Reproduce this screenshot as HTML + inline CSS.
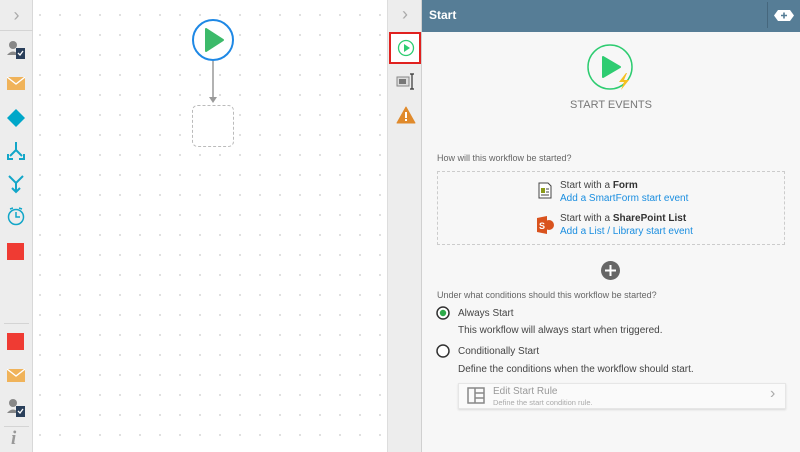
<!DOCTYPE html>
<html><head><style>
*{margin:0;padding:0;box-sizing:border-box}
body{width:800px;height:452px;overflow:hidden;font-family:"Liberation Sans",sans-serif;background:#fff;position:relative}
.abs{position:absolute}
#left{left:0;top:0;width:33px;height:452px;background:#ededed;border-right:1px solid #d8d8d8}
#canvas{left:33px;top:0;width:354px;height:452px;background-color:#fff;background-image:radial-gradient(circle,#d0d0d0 0.7px,transparent 1.1px);background-size:20px 20px;background-position:-3px 5px}
#strip{left:387px;top:0;width:35px;height:452px;background:#ededed;border-left:1px solid #ddd;border-right:1px solid #d0d0d0}
#panel{left:422px;top:0;width:378px;height:452px;background:#f7f7f7}
#hdr{left:0;top:0;width:378px;height:32px;background:#567d96;color:#fff;font-size:12px;font-weight:bold;padding:8px 0 0 7px}
.t{font-size:9px;color:#666}
.n{font-size:10px;color:#444}
.l{font-size:10px;color:#1a8ee0}
.chev{color:#aaa;font-size:18px;text-align:center}
</style></head><body>
<div id="left" class="abs">
 <div class="abs chev" style="left:0;top:0;width:33px;height:31px;border-bottom:1px solid #d4d4d4;line-height:30px">&#x203A;</div>
 <svg class="abs" style="left:6px;top:40px" width="22" height="20"><circle cx="7" cy="5" r="4" fill="#888"/><path d="M1 15 Q7 8 13 15Z" fill="#888"/><rect x="10" y="8" width="9" height="11" fill="#2a3f5a"/><path d="M12 13l2 2 3-4" stroke="#fff" fill="none" stroke-width="1.3"/></svg>
 <svg class="abs" style="left:7px;top:77px" width="18" height="13"><rect width="18" height="13" fill="#f0b35a"/><path d="M0 0l9 7 9-7" stroke="#fff" fill="none" stroke-width="1.3"/></svg>
 <svg class="abs" style="left:6px;top:108px" width="20" height="20"><path d="M10 1l9 9-9 9-9-9z" fill="#00a7c9"/></svg>
 <svg class="abs" style="left:7px;top:141px" width="18" height="20" fill="none" stroke="#12a6c8" stroke-width="2"><path d="M9 1v8M9 9l-6 6M9 9l6 6"/><path d="M1 13v5h5M17 13v5h-5" /></svg>
 <svg class="abs" style="left:7px;top:174px" width="18" height="20" fill="none" stroke="#12a6c8" stroke-width="2"><path d="M2 2l7 7 7-7M9 9v8"/><path d="M5 14l4 4 4-4"/></svg>
 <svg class="abs" style="left:6px;top:206px" width="20" height="20" fill="none" stroke="#12a6c8" stroke-width="1.5"><circle cx="10" cy="11" r="7.5"/><path d="M10 6v5h4M4 3l3-1M16 3l-3-1"/></svg>
 <div class="abs" style="left:7px;top:243px;width:17px;height:17px;background:#ef3b33"></div>
 <div class="abs" style="left:4px;top:323px;width:25px;height:1px;background:#d4d4d4"></div>
 <div class="abs" style="left:7px;top:333px;width:17px;height:17px;background:#ef3b33"></div>
 <svg class="abs" style="left:7px;top:369px" width="18" height="13"><rect width="18" height="13" fill="#f0b35a"/><path d="M0 0l9 7 9-7" stroke="#fff" fill="none" stroke-width="1.3"/></svg>
 <svg class="abs" style="left:6px;top:398px" width="22" height="20"><circle cx="7" cy="5" r="4" fill="#888"/><path d="M1 15 Q7 8 13 15Z" fill="#888"/><rect x="10" y="8" width="9" height="11" fill="#2a3f5a"/><path d="M12 13l2 2 3-4" stroke="#fff" fill="none" stroke-width="1.3"/></svg>
 <div class="abs" style="left:4px;top:426px;width:25px;height:1px;background:#d4d4d4"></div>
 <div class="abs" style="left:11px;top:428px;font:italic bold 19px 'Liberation Serif',serif;color:#999">i</div>
</div>
<div id="canvas" class="abs">
 <svg class="abs" style="left:158px;top:18px" width="46" height="132">
  <circle cx="22" cy="22" r="20" fill="#fff" stroke="#1e88e5" stroke-width="2"/>
  <path d="M15 11 L32 22 L15 33Z" fill="#3dba6a" stroke="#3dba6a" stroke-width="2" stroke-linejoin="round"/>
  <line x1="22" y1="43" x2="22" y2="80" stroke="#999" stroke-width="1.5"/>
  <path d="M18 79l4 6 4-6z" fill="#999"/>
  <rect x="1.5" y="87.5" width="41" height="41" rx="5" fill="#fff" stroke="#bbb" stroke-dasharray="3 2"/>
 </svg>
</div>
<div id="strip" class="abs">
 <div class="abs chev" style="left:0;top:0;width:34px;height:31px;line-height:29px">&#x203A;</div>
 <div class="abs" style="left:1px;top:32px;width:32px;height:32px;border:2px solid #e0211f;background:#fff"></div>
 <svg class="abs" style="left:9px;top:39px" width="18" height="18"><circle cx="9" cy="9" r="7.5" fill="none" stroke="#2ecc71" stroke-width="1.3"/><path d="M7 5l6 4-6 4z" fill="#2ecc71"/></svg>
 <svg class="abs" style="left:8px;top:73px" width="20" height="18"><rect x="1" y="4" width="12" height="9" fill="#ddd" stroke="#888"/><rect x="3" y="6" width="7" height="5" fill="#777"/><path d="M14 1h4M16 1v15M14 16h4" stroke="#333" stroke-width="1.2" fill="none"/></svg>
 <svg class="abs" style="left:8px;top:106px" width="20" height="18"><path d="M10 1L19 17H1Z" fill="#e08a2c" stroke="#e08a2c" stroke-linejoin="round"/><rect x="9" y="6" width="2" height="6" fill="#fff"/><rect x="9" y="13" width="2" height="2" fill="#fff"/></svg>
</div>
<div id="panel" class="abs">
 <div id="hdr" class="abs">Start</div>
 <div class="abs" style="left:345px;top:2px;width:1px;height:26px;background:#46677d"></div>
 <svg class="abs" style="left:352px;top:10px" width="20" height="11"><path d="M4 0h12l4 5.5-4 5.5H4L0 5.5z" fill="#fff"/><path d="M10 2.5v6M7 5.5h6" stroke="#567d96" stroke-width="1.6"/></svg>
 <svg class="abs" style="left:164px;top:43px" width="52" height="50"><circle cx="24" cy="24" r="22" fill="none" stroke="#2ecc71" stroke-width="1.5"/><path d="M17 14 L34 24 L17 34Z" fill="#2ecc71" stroke="#2ecc71" stroke-width="2" stroke-linejoin="round"/><path d="M40 30l-7 9h5l-3 8 8-10h-5l3-7z" fill="#f5c022"/></svg>
 <div class="abs" style="left:0;top:99px;width:378px;text-align:center;font-size:11px;color:#777">START EVENTS</div>
 <div class="abs t" style="left:15px;top:153px">How will this workflow be started?</div>
 <div class="abs" style="left:15px;top:171px;width:348px;height:74px;border:1px dashed #ccc"></div>
 <svg class="abs" style="left:116px;top:182px" width="14" height="17"><path d="M1 1h9l3 3v12H1z" fill="#fff" stroke="#444"/><rect x="3" y="6" width="4" height="5" fill="#8a9a1a"/><path d="M8 7h3M8 10h3M3 13h8" stroke="#444"/></svg>
 <div class="abs n" style="left:138px;top:180px">Start with a <b style="color:#333">Form</b></div>
 <div class="abs l" style="left:138px;top:193px">Add a SmartForm start event</div>
 <svg class="abs" style="left:113px;top:215px" width="20" height="20"><path d="M2 3l10-2v18L2 17z" fill="#d9531e"/><circle cx="14" cy="10" r="5" fill="#d9531e"/><text x="4" y="14" font-size="9" fill="#fff" font-family="Liberation Sans" font-weight="bold">S</text></svg>
 <div class="abs n" style="left:138px;top:213px">Start with a <b style="color:#333">SharePoint List</b></div>
 <div class="abs l" style="left:138px;top:226px">Add a List / Library start event</div>
 <svg class="abs" style="left:179px;top:261px" width="19" height="19"><circle cx="9.5" cy="9.5" r="9.5" fill="#666"/><path d="M9.5 4v11M4 9.5h11" stroke="#fff" stroke-width="2"/></svg>
 <div class="abs t" style="left:15px;top:290px">Under what conditions should this workflow be started?</div>
 <svg class="abs" style="left:14px;top:306px" width="14" height="14"><circle cx="7" cy="7" r="6" fill="#fff" stroke="#333" stroke-width="1.5"/><circle cx="7" cy="7" r="3.2" fill="#2eaa4a"/></svg>
 <div class="abs n" style="left:36px;top:308px">Always Start</div>
 <div class="abs n" style="left:36px;top:325px">This workflow will always start when triggered.</div>
 <svg class="abs" style="left:14px;top:344px" width="14" height="14"><circle cx="7" cy="7" r="6" fill="#fff" stroke="#333" stroke-width="1.5"/></svg>
 <div class="abs n" style="left:36px;top:346px">Conditionally Start</div>
 <div class="abs n" style="left:36px;top:364px">Define the conditions when the workflow should start.</div>
 <div class="abs" style="left:36px;top:383px;width:328px;height:26px;background:#fafafa;border:1px solid #e6e6e6;box-shadow:0 1px 2px rgba(0,0,0,.12)"></div>
 <svg class="abs" style="left:45px;top:387px" width="18" height="17" fill="none" stroke="#888" stroke-width="1.5"><rect x="1" y="1" width="16" height="15"/><path d="M8 1v15M8 6h9M8 11h9"/></svg>
 <div class="abs" style="left:71px;top:386px;font-size:10px;color:#999">Edit Start Rule</div>
 <div class="abs" style="left:71px;top:398px;font-size:7.5px;color:#aaa">Define the start condition rule.</div>
 <div class="abs" style="left:348px;top:385px;font-size:16px;color:#aaa">&#x203A;</div>
</div>
</body></html>
